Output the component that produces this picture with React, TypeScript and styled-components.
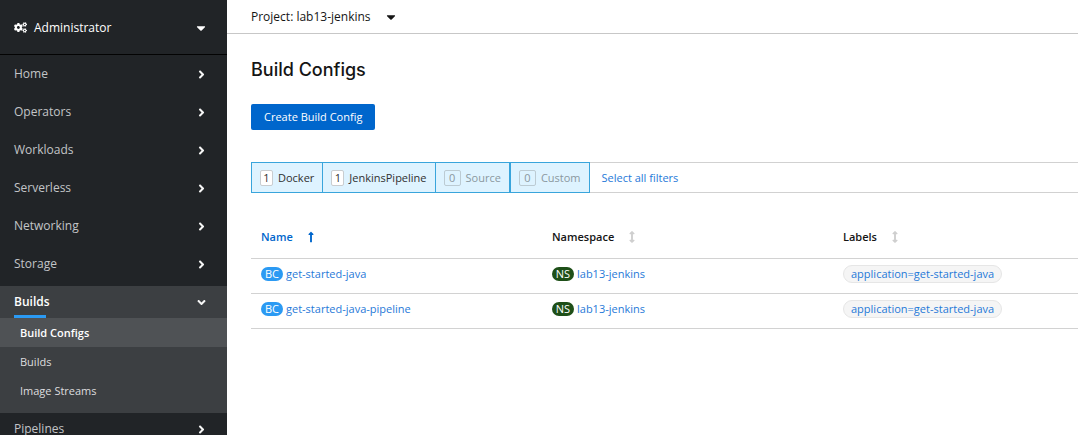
import React from "react";
import styled, { createGlobalStyle, css } from "styled-components";
import {
  FaAngleDown,
  FaAngleRight,
  FaArrowsAltV,
  FaCaretDown,
  FaCogs,
  FaLongArrowAltUp,
} from "react-icons/fa";

const GlobalStyle = createGlobalStyle`
  * { box-sizing: border-box; }
  body {
    margin: 0;
    background: #fff;
    color: #151515;
    font-family: "Open Sans", "Liberation Sans", sans-serif;
    font-size: 11px;
    line-height: 16px;
  }
  #root { overflow: hidden; height: 100vh; }
  button { font: inherit; color: inherit; border: 0; background: none; padding: 0; cursor: pointer; }
  a { text-decoration: none; }
  ul { list-style: none; margin: 0; padding: 0; }
`;

const Page = styled.div`
  display: flex;
  min-height: 100vh;
`;

const Sidebar = styled.nav`
  flex: 0 0 227px;
  background: #212427;
  color: #fff;
`;

const PerspectiveToggle = styled.button`
  display: flex;
  align-items: center;
  gap: 7px;
  width: 100%;
  height: 55px;
  padding: 1px 19px 0 14px;
  border-bottom: 1px solid #030303;
  color: #fff;
  font-size: 12px;
  text-align: left;

  svg:last-child { margin-left: auto; }
`;

const NavList = styled.ul`
  padding-top: 3px;
`;

const NavSection = styled.li<{ $open?: boolean }>`
  padding-bottom: 6px;
  ${(p) =>
    p.$open &&
    css`
      padding-bottom: 8px;
      background: #3c3f42;
    `}
`;

const NavToggle = styled.button<{ $open?: boolean }>`
  position: relative;
  display: flex;
  align-items: center;
  justify-content: space-between;
  width: 100%;
  height: 32px;
  padding: 0 19px 0 14px;
  font-size: 12px;
  color: ${(p) => (p.$open ? "#fff" : "#c3c5c7")};
  font-weight: ${(p) => (p.$open ? 600 : 400)};

  svg { color: #f5f5f5; }

  ${(p) =>
    p.$open &&
    css`
      &::after {
        content: "";
        position: absolute;
        left: 14px;
        bottom: 0;
        width: 32px;
        height: 3px;
        background: #2b9af3;
      }
    `}
`;

const SubLink = styled.a<{ $current?: boolean }>`
  display: block;
  padding: 7px 20px 6px;
  color: ${(p) => (p.$current ? "#fff" : "#dcdddf")};
  background: ${(p) => (p.$current ? "#4f5255" : "transparent")};
  font-weight: ${(p) => (p.$current ? 600 : 400)};
`;

const Main = styled.main`
  flex: 1;
  min-width: 0;
`;

const ProjectBar = styled.div`
  display: flex;
  align-items: center;
  height: 34px;
  padding: 1px 0 0 24px;
  border-bottom: 1px solid #c7c7c7;
`;

const ProjectButton = styled.button`
  display: flex;
  align-items: center;
  gap: 13px;
  font-size: 12px;
`;

const Content = styled.div`
  padding-left: 24px;
`;

const Title = styled.h1`
  margin: 0;
  padding: 23px 0 21px;
  font-family: Inter, "Liberation Sans", sans-serif;
  font-size: 18px;
  font-weight: 500;
  line-height: 26px;
`;

const PrimaryButton = styled.button`
  display: block;
  height: 26px;
  padding: 0 13px;
  border-radius: 2px;
  background: #06c;
  color: #fff;
`;

const FilterBar = styled.div`
  display: flex;
  align-items: stretch;
  height: 31px;
  margin-top: 32px;
  border: solid #d1d1d1;
  border-width: 1px 0;
`;

const FilterButton = styled.button<{ $empty?: boolean }>`
  display: flex;
  align-items: center;
  gap: 5px;
  margin: -1px 0;
  padding: 0 8px;
  border: 1px solid #39a5dc;
  background: #def3ff;
  color: ${(p) => (p.$empty ? "#8b98a0" : "#303030")};

  & + & { margin-left: -1px; }
  &:nth-child(4) { margin-left: 0; }
`;

const Count = styled.span<{ $empty?: boolean }>`
  width: ${(p) => (p.$empty ? 17 : 13)}px;
  height: 16px;
  border: 1px solid ${(p) => (p.$empty ? "#bccbd3" : "#c9cdd0")};
  border-radius: 2px;
  background: ${(p) => (p.$empty ? "transparent" : "#fff")};
  line-height: 14px;
  text-align: center;
`;

const SelectAll = styled.button`
  padding: 0 12px;
  color: #1f79d8;
`;

const Table = styled.table`
  width: 100%;
  margin-top: 23px;
  table-layout: fixed;
  border-collapse: collapse;
`;

const HeadCell = styled.th<{ $wide?: boolean }>`
  width: ${(p) => (p.$wide ? "291px" : "auto")};
  height: 42px;
  padding: 1px 0 0 10px;
  border-bottom: 1px solid #d2d2d2;
  text-align: left;
  font-weight: 600;
`;

const SortButton = styled.button<{ $active?: boolean }>`
  display: flex;
  align-items: center;
  gap: 12px;
  color: ${(p) => (p.$active ? "#06c" : "#151515")};

  svg { color: ${(p) => (p.$active ? "#06c" : "#cfcfcf")}; }
`;

const Cell = styled.td`
  height: 35px;
  padding: 0 0 4px 10px;
  border-bottom: 1px solid #d2d2d2;
`;

const Resource = styled.span`
  display: flex;
  align-items: center;
  gap: 3px;
`;

const Badge = styled.span<{ $color: string }>`
  width: 22px;
  height: 14px;
  border-radius: 7px;
  background: ${(p) => p.$color};
  color: #fff;
  line-height: 14px;
  text-align: center;
`;

const Link = styled.a`
  color: #1f79d8;
`;

const LabelChip = styled.a`
  display: inline-block;
  height: 18px;
  padding: 0 7px;
  border: 1px solid #e6e6e6;
  border-radius: 9px;
  background: #f5f5f5;
  color: #1f79d8;
  vertical-align: middle;
`;

const sectionsBefore = ["Home", "Operators", "Workloads", "Serverless", "Networking", "Storage"];
const buildLinks = ["Build Configs", "Builds", "Image Streams"];
const filters = [
  { name: "Docker", count: 1 },
  { name: "JenkinsPipeline", count: 1 },
  { name: "Source", count: 0 },
  { name: "Custom", count: 0 },
];
const rows = ["get-started-java", "get-started-java-pipeline"];

function ClosedSection({ name }: { name: string }) {
  return (
    <NavSection>
      <NavToggle aria-expanded={false}>
        {name}
        <FaAngleRight size={13} />
      </NavToggle>
    </NavSection>
  );
}

export default function App() {
  return (
    <>
      <GlobalStyle />
      <Page>
        <Sidebar>
          <PerspectiveToggle>
            <FaCogs size={13} />
            Administrator
            <FaCaretDown size={14} />
          </PerspectiveToggle>
          <NavList>
            {sectionsBefore.map((name) => (
              <ClosedSection key={name} name={name} />
            ))}
            <NavSection $open>
              <NavToggle $open aria-expanded>
                Builds
                <FaAngleDown size={13} />
              </NavToggle>
              <ul>
                {buildLinks.map((name, i) => (
                  <li key={name}>
                    <SubLink href="#" $current={i === 0}>
                      {name}
                    </SubLink>
                  </li>
                ))}
              </ul>
            </NavSection>
            <ClosedSection name="Pipelines" />
          </NavList>
        </Sidebar>
        <Main>
          <ProjectBar>
            <ProjectButton>
              Project: lab13-jenkins
              <FaCaretDown size={14} />
            </ProjectButton>
          </ProjectBar>
          <Content>
            <Title>Build Configs</Title>
            <PrimaryButton>Create Build Config</PrimaryButton>
            <FilterBar>
              {filters.map((f) => (
                <FilterButton key={f.name} $empty={f.count === 0}>
                  <Count $empty={f.count === 0}>{f.count}</Count>
                  {f.name}
                </FilterButton>
              ))}
              <SelectAll>Select all filters</SelectAll>
            </FilterBar>
            <Table>
              <thead>
                <tr>
                  <HeadCell $wide aria-sort="ascending">
                    <SortButton $active>
                      Name
                      <FaLongArrowAltUp size={12} />
                    </SortButton>
                  </HeadCell>
                  <HeadCell $wide>
                    <SortButton>
                      Namespace
                      <FaArrowsAltV size={12} />
                    </SortButton>
                  </HeadCell>
                  <HeadCell>
                    <SortButton>
                      Labels
                      <FaArrowsAltV size={12} />
                    </SortButton>
                  </HeadCell>
                </tr>
              </thead>
              <tbody>
                {rows.map((name) => (
                  <tr key={name}>
                    <Cell>
                      <Resource>
                        <Badge $color="#2b9af3">BC</Badge>
                        <Link href="#">{name}</Link>
                      </Resource>
                    </Cell>
                    <Cell>
                      <Resource>
                        <Badge $color="#1e4f18">NS</Badge>
                        <Link href="#">lab13-jenkins</Link>
                      </Resource>
                    </Cell>
                    <Cell>
                      <LabelChip href="#">application=get-started-java</LabelChip>
                    </Cell>
                  </tr>
                ))}
              </tbody>
            </Table>
          </Content>
        </Main>
      </Page>
    </>
  );
}
